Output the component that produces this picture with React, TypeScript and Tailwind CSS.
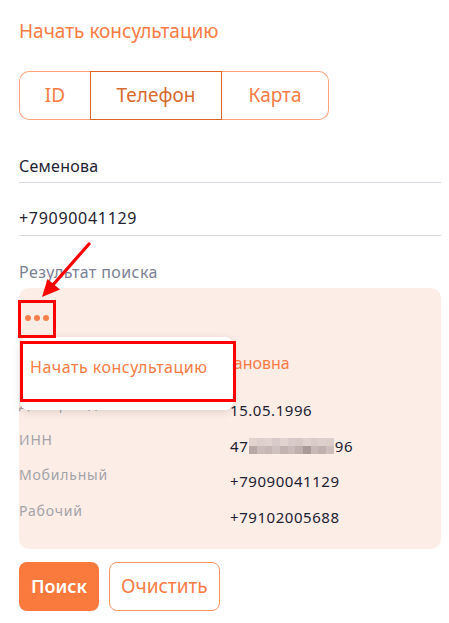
import React from "react";

const blurTop = ["bg-[#e2d3ce]","bg-[#dccfcc]","bg-[#e0d2cf]","bg-[#d7cac8]","bg-[#e1d3d0]","bg-[#d9cbc9]","bg-[#d6c9c6]","bg-[#dfd1ce]","bg-[#d8cbc8]","bg-[#ddcfcc]","bg-[#dbcdca]"];
const blurBot = ["bg-[#b8a8a6]","bg-[#cbbcb9]","bg-[#c6b7b4]","bg-[#cfc1be]","bg-[#c2b3b0]","bg-[#cabbb8]","bg-[#bfb0ad]","bg-[#a99997]","bg-[#c8b9b6]","bg-[#c0b1ae]","bg-[#cdbfbc]"];

function Row({ label, children }: { label: string; children: React.ReactNode }) {
  return (
    <div className="flex h-[35.7px]">
      <div className="w-[211px] text-[14px] leading-[18px] tracking-[0.8px] text-[#a3a3a8]">{label}</div>
      <div className="pt-[5px] text-[15px] leading-[20px] text-[#1f2233] tracking-[0.55px]">{children}</div>
    </div>
  );
}

export default function App() {
  return (
    <div
      className="relative w-[449px] h-[623px] bg-white pl-[19px] pr-[8px] pt-[19px]"
      style={{ fontFamily: '"Noto Sans", "Open Sans", sans-serif' }}
    >
      <div className="text-[19px] leading-[24px] text-[#f97c45]">Начать консультацию</div>

      <div className="mt-[28px] flex h-[49px] w-[310px] text-[19px]">
        <div className="flex w-[71px] items-center justify-center rounded-l-[10px] border border-r-0 border-[#fba57e] text-[#f97c45]">ID</div>
        <div className="flex w-[132px] items-center justify-center border border-[#e2651f] text-[#d86a2e]">Телефон</div>
        <div className="flex w-[107px] items-center justify-center rounded-r-[10px] border border-l-0 border-[#fba57e] text-[#f97c45]">Карта</div>
      </div>

      <div className="pt-[34px] pb-[4px] border-b border-[#d9dae0] text-[16px] leading-[24px] tracking-[0.25px] text-[#1f2233]">Семенова</div>
      <div className="pt-[23px] pb-[5px] border-b border-[#d9dae0] text-[16px] leading-[24px] tracking-[0.7px] text-[#1f2233]">+79090041129</div>

      <div className="mt-[26px] text-[16px] leading-[20px] tracking-[0.4px] text-[#7c8194]">Результат поиска</div>

      <div className="mt-[6px] h-[261px] rounded-[10px] bg-[#fdede7] pt-[11px]">
        <div className="flex h-[38px] items-center gap-[3px] pl-[6px]">
          <span className="h-[6px] w-[6px] rounded-full bg-[#f8804a]" />
          <span className="h-[6px] w-[6px] rounded-full bg-[#f8804a]" />
          <span className="h-[6px] w-[6px] rounded-full bg-[#f8804a]" />
        </div>
        <div className="mt-[16px] text-[16px] leading-[20px] text-[#f97c45] pl-[47px]">Семенова Ольга Степановна</div>
        <div className="mt-[22px]">
          <Row label="Дата рождения">15.05.1996</Row>
          <Row label="ИНН">
            <span className="inline-flex items-center">
              47
              <span className="mx-[1px] inline-flex flex-col">
                <span className="flex">
                  {blurTop.map((c, i) => (
                    <span key={i} className={`h-[8px] w-[7.7px] ${c}`} />
                  ))}
                </span>
                <span className="flex">
                  {blurBot.map((c, i) => (
                    <span key={i} className={`h-[8px] w-[7.7px] ${c}`} />
                  ))}
                </span>
              </span>
              96
            </span>
          </Row>
          <Row label="Мобильный">+79090041129</Row>
          <Row label="Рабочий">+79102005688</Row>
        </div>
      </div>

      <div className="mt-[13px] flex gap-[10px]">
        <button className="h-[49px] rounded-[8px] bg-[#f97a3c] px-[12px] text-[18px] font-semibold text-white">Поиск</button>
        <button className="h-[49px] rounded-[8px] border border-[#f8925f] px-[11px] text-[19px] text-[#f97c45]">Очистить</button>
      </div>

      {/* overlay: dropdown */}
      <div className="absolute left-[20px] top-[337px] h-[73px] w-[213px] rounded-[8px] bg-white shadow-[0_2px_10px_rgba(0,0,0,0.12)]">
        <div className="pl-[10px] pt-[19px] text-[16px] leading-[22px] tracking-[0.5px] text-[#f97c45]">Начать консультацию</div>
      </div>
      {/* red annotation boxes */}
      <div className="absolute left-[20px] top-[341px] h-[61px] w-[216px] border-[3px] border-[#ff0000]" />
      <div className="absolute left-[18px] top-[300px] h-[38px] w-[38px] border-[3px] border-[#ff0000]" />
      <svg className="absolute left-0 top-0" width="449" height="623" viewBox="0 0 449 623">
        <line x1="89" y1="244" x2="52" y2="286" stroke="#ff0000" strokeWidth="3.2" strokeLinecap="round" />
        <polygon points="42,297 47.5,279 60,289.5" fill="#ff0000" />
      </svg>
    </div>
  );
}
